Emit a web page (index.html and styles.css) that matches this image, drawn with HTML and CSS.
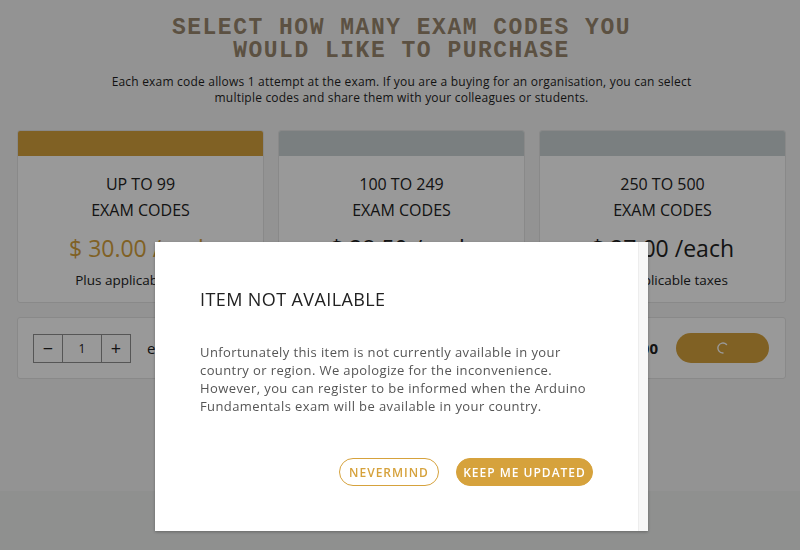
FILE: index.html
```html
<!DOCTYPE html>
<html lang="en">
<head>
<meta charset="utf-8">
<title>Select exam codes</title>
<link rel="stylesheet" href="styles.css">
</head>
<body>
<div class="page">
  <main class="main">
    <header class="intro">
      <h1 class="title">SELECT HOW MANY EXAM CODES YOU<br>WOULD LIKE TO PURCHASE</h1>
      <p class="lead">Each exam code allows 1 attempt at the exam. If you are a buying for an organisation, you can select<br>multiple codes and share them with your colleagues or students.</p>
    </header>
    <section class="tiers">
      <div class="tier tier-active">
        <div class="tier-bar"></div>
        <div class="tier-body">
          <div class="tier-range">UP TO 99<br>EXAM CODES</div>
          <div class="tier-price">$ 30.00 /each</div>
          <div class="tier-tax">Plus applicable taxes</div>
        </div>
      </div>
      <div class="tier">
        <div class="tier-bar"></div>
        <div class="tier-body">
          <div class="tier-range">100 TO 249<br>EXAM CODES</div>
          <div class="tier-price">$ 28.50 /each</div>
          <div class="tier-tax">Plus applicable taxes</div>
        </div>
      </div>
      <div class="tier">
        <div class="tier-bar"></div>
        <div class="tier-body">
          <div class="tier-range">250 TO 500<br>EXAM CODES</div>
          <div class="tier-price">$ 27.00 /each</div>
          <div class="tier-tax">Plus applicable taxes</div>
        </div>
      </div>
    </section>
    <section class="buybar">
      <div class="stepper">
        <span class="step step-btn">&minus;</span>
        <span class="step step-val">1</span>
        <span class="step step-btn">+</span>
      </div>
      <span class="buy-label">exam code</span>
      <span class="buy-total">$ 30.00</span>
      <span class="buy-btn">
        <svg class="spinner" width="12" height="12" viewBox="0 0 12 12"><path d="M9.5 2.5 A5 5 0 1 0 6 11" fill="none" stroke="#ffffff" stroke-width="1.4" stroke-linecap="round"/></svg>
      </span>
    </section>
  </main>
  <footer class="footer"></footer>
</div>

<div class="overlay">
  <div class="modal">
    <div class="modal-content">
      <h2 class="modal-title">ITEM NOT AVAILABLE</h2>
      <p class="modal-text">Unfortunately this item is not currently available in your country or region. We apologize for the inconvenience. However, you can register to be informed when the Arduino Fundamentals exam will be available in your country.</p>
      <div class="modal-actions">
        <button class="btn btn-outline">NEVERMIND</button>
        <button class="btn btn-fill">KEEP ME UPDATED</button>
      </div>
    </div>
    <div class="modal-scroll"></div>
  </div>
</div>
</body>
</html>
```

FILE: styles.css
```css
* { box-sizing: border-box; }
html, body { margin: 0; padding: 0; }
body {
  font-family: "Open Sans", "Liberation Sans", sans-serif;
  color: #202020;
  background: #f6f6f6;
  width: 800px;
  height: 550px;
  overflow: hidden;
}
.page { display: flex; flex-direction: column; height: 550px; }
.main { height: 491px; padding: 17px 14px 0 17px; background: #f6f6f6; }
.footer { flex: 1; background: #eef0ef; }

.intro { text-align: center; }
.title {
  margin: 0;
  font-family: "Liberation Mono", "DejaVu Sans Mono", monospace;
  font-weight: 700;
  font-size: 23px;
  line-height: 23px;
  letter-spacing: 1.5px;
  color: #99876e;
}
.lead {
  margin: 11px 0 0;
  font-size: 12px;
  line-height: 16px;
  letter-spacing: 0.2px;
  color: #1e1e1e;
}

.tiers {
  margin-top: 24px;
  display: grid;
  grid-template-columns: repeat(3, 1fr);
  gap: 14px;
}
.tier {
  background: #ffffff;
  border: 1px solid #e4e4e4;
  border-radius: 3px;
  overflow: hidden;
  text-align: center;
}
.tier-bar { height: 25px; background: #cbd4d5; }
.tier-active .tier-bar { background: #d6a23c; }
.tier-body { padding: 15px 10px 13px; }
.tier-range { font-size: 16px; line-height: 26px; color: #222; }
.tier-price { margin-top: 10px; font-size: 23px; line-height: 30px; color: #222; }
.tier-active .tier-price { color: #d6a23c; }
.tier-tax { margin-top: 8px; font-size: 13.5px; line-height: 18px; color: #222; }

.buybar {
  margin-top: 14px;
  height: 62px;
  background: #ffffff;
  border: 1px solid #e4e4e4;
  border-radius: 3px;
  display: flex;
  align-items: center;
  padding: 0 16px 0 15px;
}
.stepper { display: flex; border: 1px solid #8f8f8f; height: 29px; }
.step { display: flex; align-items: center; justify-content: center; font-size: 13px; color: #222; }
.step-btn { width: 28px; font-size: 18px; }
.step-val { width: 40px; border-left: 1px solid #8f8f8f; border-right: 1px solid #8f8f8f; font-size: 12px; }
.buy-label { margin-left: 16px; font-size: 15px; }
.buy-total { margin-left: auto; font-size: 15px; font-weight: 700; }
.buy-btn {
  margin-left: 18px;
  width: 93px;
  height: 30px;
  border-radius: 15px;
  background: #d6a23c;
  display: flex;
  align-items: center;
  justify-content: center;
}

.overlay {
  position: fixed;
  inset: 0;
  background: rgba(0, 0, 0, 0.4);
  display: flex;
  justify-content: center;
  align-items: flex-start;
  padding-top: 242px;
  padding-left: 3px;
}
.modal {
  width: 493px;
  height: 289px;
  background: #ffffff;
  display: flex;
  box-shadow: 0 1px 3px rgba(0, 0, 0, 0.3);
}
.modal-content { flex: 1; padding: 45px 45px 0; }
.modal-scroll { width: 10px; background: #f7f7f7; border-left: 1px solid #ededed; }
.modal-title {
  margin: 0;
  font-size: 18px;
  line-height: 24px;
  font-weight: 400;
  letter-spacing: 0.4px;
  color: #222;
}
.modal-text {
  margin: 32px 0 0;
  font-size: 13px;
  line-height: 18px;
  letter-spacing: 0.4px;
  color: #555;
}
.modal-actions {
  margin-top: 43px;
  display: flex;
  justify-content: flex-end;
  gap: 17px;
}
.btn {
  height: 28px;
  border-radius: 14px;
  font-family: "Open Sans", sans-serif;
  font-size: 12px;
  font-weight: 600;
  letter-spacing: 1px;
  border: 1px solid #d6a23c;
  padding: 0;
  white-space: nowrap;
  cursor: pointer;
}
.btn-outline { background: #fff; color: #d6a23c; width: 100px; }
.btn-fill { background: #d6a23c; color: #fff; width: 137px; }
```
